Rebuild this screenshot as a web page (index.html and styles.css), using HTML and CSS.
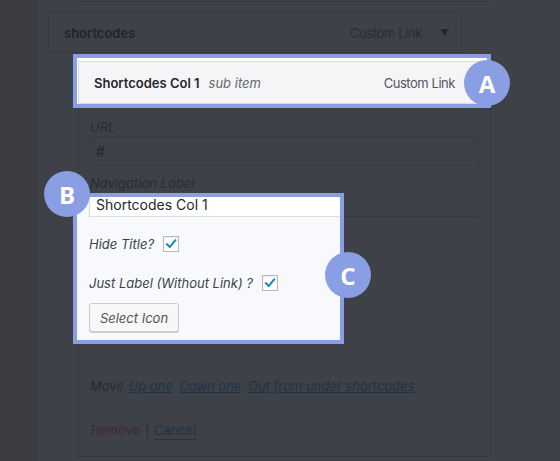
FILE: index.html
```html
<!DOCTYPE html>
<html lang="en">
<head>
<meta charset="utf-8">
<title>Menu item settings</title>
<link rel="stylesheet" href="styles.css">
</head>
<body>
<div class="page">
  <aside class="strip"></aside>
  <main class="menu">
    <div class="prev-item"></div>
    <div class="item-bar">
      <span class="item-title">shortcodes</span>
      <span class="item-controls"><span class="item-type">Custom Link</span><span class="arrow">&#9660;</span></span>
    </div>
    <div class="sub-item">
      <div class="hl-a">
        <div class="sub-bar">
          <span class="sub-title"><b>Shortcodes Col 1</b><i>sub item</i></span>
          <span class="sub-type">Custom Link</span>
        </div>
        <span class="badge badge-a">A</span>
      </div>
      <div class="settings">
        <div class="field-label">URL</div>
        <div class="dark-input url">#</div>
        <div class="field-label nav">Navigation Label</div>
        <div class="c-row">
          <div class="hl-c">
            <div class="light-input">Shortcodes Col 1</div>
            <div class="check-row">Hide Title?
              <span class="cb"><svg viewBox="0 0 16 16" width="16" height="16"><path d="M3.4 8.2 L6.6 11.4 L12.8 4" fill="none" stroke="#1e8cbe" stroke-width="2.4" stroke-linecap="square"/></svg></span>
            </div>
            <div class="check-row">Just Label (Without Link) ?
              <span class="cb"><svg viewBox="0 0 16 16" width="16" height="16"><path d="M3.4 8.2 L6.6 11.4 L12.8 4" fill="none" stroke="#1e8cbe" stroke-width="2.4" stroke-linecap="square"/></svg></span>
            </div>
            <button class="select-icon" type="button">Select Icon</button>
            <span class="badge badge-b">B</span>
            <span class="badge badge-c">C</span>
          </div>
          <div class="dark-input stub"></div>
        </div>
        <div class="move">Move <a href="#">Up one</a> <a href="#">Down one</a> <a href="#">Out from under shortcodes</a></div>
        <div class="actions"><a class="remove" href="#">Remove</a><span class="sep">|</span><a class="cancel" href="#">Cancel</a></div>
      </div>
    </div>
  </main>
</div>
</body>
</html>
```

FILE: styles.css
```css
html, body {
  margin: 0;
  padding: 0;
}
body {
  background: #3e4148;
  font-family: Inter, Roboto, "Liberation Sans", sans-serif;
  font-size: 13px;
  color: #25272c;
  width: 560px;
  height: 461px;
  overflow: hidden;
}
.page {
  display: flex;
  height: 461px;
}
.strip {
  width: 36px;
  flex: none;
  background: #3a3c42;
  border-right: 1px solid #35373d;
}
.menu {
  flex: 1;
  display: flex;
  flex-direction: column;
}
.prev-item {
  margin-left: 42px;
  width: 409px;
  height: 1px;
  border-bottom: 1px solid #34363c;
  border-right: 1px solid #34363c;
}
.item-bar {
  margin: 10px 0 0 11px;
  width: 414px;
  height: 41px;
  box-sizing: border-box;
  border: 1px solid #36383e;
  display: flex;
  align-items: center;
  justify-content: space-between;
  padding: 0 12px 0 15px;
}
.item-title {
  font-weight: 600;
  color: #222429;
}
.item-controls {
  display: flex;
  align-items: center;
  color: #2a2c32;
}
.item-type {
  letter-spacing: -0.4px;
}
.arrow {
  font-size: 9px;
  margin-left: 18px;
  color: #24262b;
}
.sub-item {
  margin: 1px 0 0 36px;
  width: 418px;
  display: flex;
  flex-direction: column;
}
.hl-a {
  position: relative;
  height: 54px;
  box-sizing: border-box;
  border: 4px solid #8a9ee4;
  background: #ffffff;
  padding: 3px 1px 0 1px;
}
.sub-bar {
  height: 43px;
  box-sizing: border-box;
  border: 1px solid #d9dbdf;
  border-right-color: #f5f5f7;
  background: #f5f5f7;
  display: flex;
  align-items: center;
  justify-content: space-between;
  padding: 0 30px 0 15px;
}
.sub-title b {
  font-weight: 600;
  color: #23282d;
}
.sub-title i {
  margin-left: 9px;
  color: #646970;
}
.sub-type {
  color: #50575e;
  letter-spacing: -0.45px;
}
.badge {
  position: absolute;
  width: 46px;
  height: 46px;
  border-radius: 50%;
  background: #8a9ee4;
  color: #ffffff;
  font-family: "Open Sans", sans-serif;
  font-weight: 700;
  font-size: 24px;
  display: flex;
  align-items: center;
  justify-content: center;
  z-index: 2;
}
.badge-a { left: 387px; top: 2px; }
.badge-b { left: -33px; top: -26px; }
.badge-c { left: 248px; top: 55px; }
.settings {
  margin-left: 5px;
  border: 1px solid #36383e;
  border-top: none;
  height: 349px;
  box-sizing: border-box;
  padding: 10px 11px 0 10px;
  display: flex;
  flex-direction: column;
}
.field-label {
  font-style: italic;
  line-height: 18px;
  padding-left: 1px;
  color: #2a2c32;
}
.field-label.nav {
  margin-top: 8px;
}
.dark-input {
  box-sizing: border-box;
  border: 1px solid #37393f;
  background: #3d4047;
}
.url {
  height: 30px;
  display: flex;
  align-items: center;
  padding-left: 6px;
  font-size: 14px;
  color: #22242a;
}
.c-row {
  margin-top: 1px;
  display: flex;
  align-items: flex-start;
}
.hl-c {
  position: relative;
  margin-left: -16px;
  width: 271px;
  height: 151px;
  flex: none;
  box-sizing: border-box;
  border: 4px solid #8a9ee4;
  background: #f7f9fd;
  padding: 0 0 0 12px;
  display: flex;
  flex-direction: column;
  align-items: flex-start;
}
.light-input {
  align-self: stretch;
  height: 20px;
  box-sizing: border-box;
  border: 1px solid #dcdde0;
  border-top: none;
  border-right: none;
  background: #ffffff;
  font-size: 14px;
  line-height: 16px;
  padding-left: 6px;
  color: #23282d;
}
.check-row {
  display: flex;
  align-items: center;
  height: 24px;
  margin-top: 15px;
  font-style: italic;
  color: #3c434a;
}
.cb {
  margin-left: 9px;
  width: 16px;
  height: 16px;
  box-sizing: border-box;
  border: 1px solid #b4b9be;
  background: #ffffff;
  box-shadow: inset 0 1px 2px rgba(0,0,0,0.08);
  display: flex;
  align-items: center;
  justify-content: center;
}
.cb svg {
  width: 14px;
  height: 14px;
}
.select-icon {
  margin-top: 8px;
  height: 29px;
  width: 90px;
  box-sizing: border-box;
  border: 1px solid #cccccc;
  border-radius: 3px;
  background: #f7f7f7;
  box-shadow: 0 1px 0 #cccccc;
  font-family: Inter, Roboto, "Liberation Sans", sans-serif;
  font-size: 13px;
  font-style: italic;
  color: #555555;
  padding: 0;
}
.stub {
  flex: 1;
  height: 24px;
  border-left: none;
}
.move {
  margin-top: 33px;
  line-height: 18px;
  font-style: italic;
  color: #282a30;
  padding-left: 1px;
  word-spacing: 1px;
}
.move a {
  color: #203346;
  text-decoration: underline;
  word-spacing: 0;
}
.move a + a {
  margin-left: 2px;
}
.actions {
  margin-top: 26px;
  line-height: 18px;
  padding-left: 2px;
  display: flex;
}
.actions a {
  text-decoration: none;
}
.remove {
  color: #3f2a31;
}
.sep {
  color: #2b2d33;
  margin: 0 4px 0 5px;
}
.cancel {
  color: #203346;
  border-bottom: 1px solid #203346;
}
```
